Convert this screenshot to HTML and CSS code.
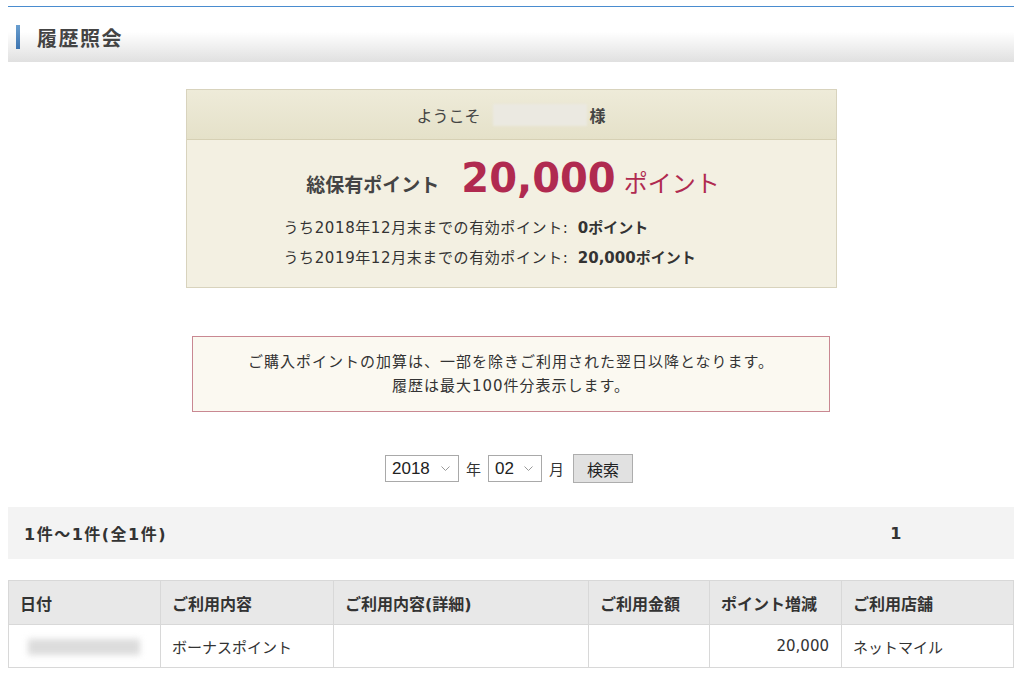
FILE: index.html
```html
<!DOCTYPE html>
<html lang="ja">
<head>
    <meta charset="UTF-8">
    <title>履歴照会</title>
    <link rel="stylesheet" href="styles.css">
</head>
<body>
    <div class="page">
        <div class="title-bar">
            <span class="title-mark"></span>
            <h1>履歴照会</h1>
        </div>

        <div class="welcome">
            <div class="welcome-head">
                ようこそ <span class="name-blur"></span><b>様</b>
            </div>
            <div class="welcome-body">
                <div class="total">
                    <span class="total-label">総保有ポイント</span>
                    <span class="total-num">20,000</span>
                    <span class="total-unit">ポイント</span>
                </div>
                <div class="expire">
                    <p>うち2018年12月末までの有効ポイント: <b>0ポイント</b></p>
                    <p>うち2019年12月末までの有効ポイント: <b>20,000ポイント</b></p>
                </div>
            </div>
        </div>

        <div class="notice">
            ご購入ポイントの加算は、一部を除きご利用された翌日以降となります。<br>
            履歴は最大100件分表示します。
        </div>

        <form class="search">
            <select class="sel-year">
                <option>2018</option>
                <option>2017</option>
            </select>
            <span>年</span>
            <select class="sel-month">
                <option>02</option>
                <option>01</option>
            </select>
            <span>月</span>
            <button type="button">検索</button>
        </form>

        <div class="pager">
            <span>1件～1件(全1件)</span>
            <span class="pager-num">1</span>
        </div>

        <table class="history">
            <thead>
                <tr>
                    <th class="c-date">日付</th>
                    <th class="c-kind">ご利用内容</th>
                    <th class="c-detail">ご利用内容(詳細)</th>
                    <th class="c-amount">ご利用金額</th>
                    <th class="c-point">ポイント増減</th>
                    <th class="c-shop">ご利用店舗</th>
                </tr>
            </thead>
            <tbody>
                <tr>
                    <td><span class="date-blur"></span></td>
                    <td>ボーナスポイント</td>
                    <td></td>
                    <td></td>
                    <td class="num">20,000</td>
                    <td>ネットマイル</td>
                </tr>
            </tbody>
        </table>
    </div>
</body>
</html>
```

FILE: styles.css
```css
body {
    margin: 0;
    font-family: "DejaVu Sans", "Noto Sans CJK JP", sans-serif;
    font-size: 15px;
    color: #333333;
    background-color: #ffffff;
}

.page {
    padding: 6px 10px 0 8px;
}

.title-bar {
    display: flex;
    align-items: center;
    box-sizing: border-box;
    height: 56px;
    padding-top: 5px;
    border-top: 1px solid #4a8ccf;
    background: linear-gradient(to bottom, #ffffff 0%, #ffffff 45%, #e0e0e0 100%);
}

.title-mark {
    width: 4px;
    height: 24px;
    margin-left: 8px;
    background: linear-gradient(to bottom, #6a9fd0, #3d74b0);
}

h1 {
    margin: 0 0 0 17px;
    font-size: 20px;
    font-weight: bold;
    letter-spacing: 1.5px;
    color: #444444;
}

.welcome {
    width: 649px;
    margin: 27px auto 0;
    border: 1px solid #d8d3bd;
    background-color: #f3f0e2;
}

.welcome-head {
    display: flex;
    justify-content: center;
    align-items: center;
    height: 49px;
    border-bottom: 1px solid #d6d0b4;
    background: linear-gradient(to bottom, #eeebd9, #e5e1c9);
    font-size: 16px;
    color: #444444;
}

.name-blur {
    display: inline-block;
    width: 94px;
    height: 22px;
    margin: 0 3px 0 12px;
    background-color: #ebe9e1;
    filter: blur(1px);
}

.welcome-body {
    padding: 13px 0 14px;
}

.total {
    display: flex;
    justify-content: center;
    align-items: baseline;
    padding-left: 4px;
}

.total-label {
    font-size: 19px;
    font-weight: bold;
    color: #444444;
}

.total-num {
    margin-left: 22px;
    font-size: 40px;
    font-weight: bold;
    line-height: 50px;
    color: #b02a50;
}

.total-unit {
    margin-left: 8px;
    font-size: 24px;
    color: #b02a50;
}

.expire {
    margin-left: 97px;
    margin-top: 10px;
}

.expire p {
    margin: 0;
    line-height: 30px;
    letter-spacing: 0.6px;
}

.expire b {
    margin-left: 4px;
    letter-spacing: 0;
    color: #333333;
}

.notice {
    width: 636px;
    margin: 48px auto 0;
    padding: 13px 0 13px;
    border: 1px solid #c98892;
    background-color: #fbf9f1;
    text-align: center;
    line-height: 24px;
    letter-spacing: 1px;
    color: #333333;
}

.search {
    display: flex;
    justify-content: center;
    align-items: center;
    gap: 7px;
    margin-top: 42px;
    padding-right: 4px;
}

.search select {
    appearance: none;
    height: 27px;
    border: 1px solid #a9a9a9;
    border-radius: 0;
    background: #ffffff url("data:image/svg+xml;utf8,<svg xmlns='http://www.w3.org/2000/svg' width='9' height='5'><path d='M0.5 0.5 L4.5 4.5 L8.5 0.5' fill='none' stroke='%23999' stroke-width='1'/></svg>") no-repeat right 8px center;
    font-family: "Liberation Sans", "Noto Sans CJK JP", sans-serif;
    font-size: 17px;
    color: #222222;
    padding: 0 4px 0 6px;
}

.sel-year {
    width: 74px;
}

.sel-month {
    width: 54px;
}

.search span {
    font-size: 15px;
    color: #333333;
}

.search button {
    height: 29px;
    width: 60px;
    margin-left: 2px;
    border: 1px solid #adadad;
    background-color: #e1e1e1;
    font-family: "Noto Sans CJK JP", sans-serif;
    font-size: 16px;
    color: #222222;
    padding: 0;
}

.pager {
    display: flex;
    justify-content: space-between;
    align-items: center;
    height: 52px;
    margin-top: 24px;
    padding: 0 111px 0 16px;
    background-color: #f3f3f3;
    font-size: 16px;
    font-weight: bold;
    letter-spacing: 1.5px;
    color: #333333;
}

.history {
    width: 100%;
    margin-top: 21px;
    border-collapse: collapse;
    table-layout: fixed;
}

.history th,
.history td {
    border: 1px solid #d8d8d8;
    padding: 0 11px;
    text-align: left;
    color: #333333;
}

.history th {
    height: 43px;
    background-color: #e8e8e8;
    font-size: 16px;
    font-weight: bold;
}

.history td {
    height: 42px;
}

.c-date { width: 129px; }
.c-kind { width: 150px; }
.c-detail { width: 232px; }
.c-amount { width: 98px; }
.c-point { width: 109px; }

.history td.num {
    text-align: right;
    padding-right: 12px;
}

.date-blur {
    display: inline-block;
    width: 112px;
    height: 16px;
    margin-left: 8px;
    vertical-align: middle;
    background-color: #dcdcdc;
    filter: blur(3px);
}
```
